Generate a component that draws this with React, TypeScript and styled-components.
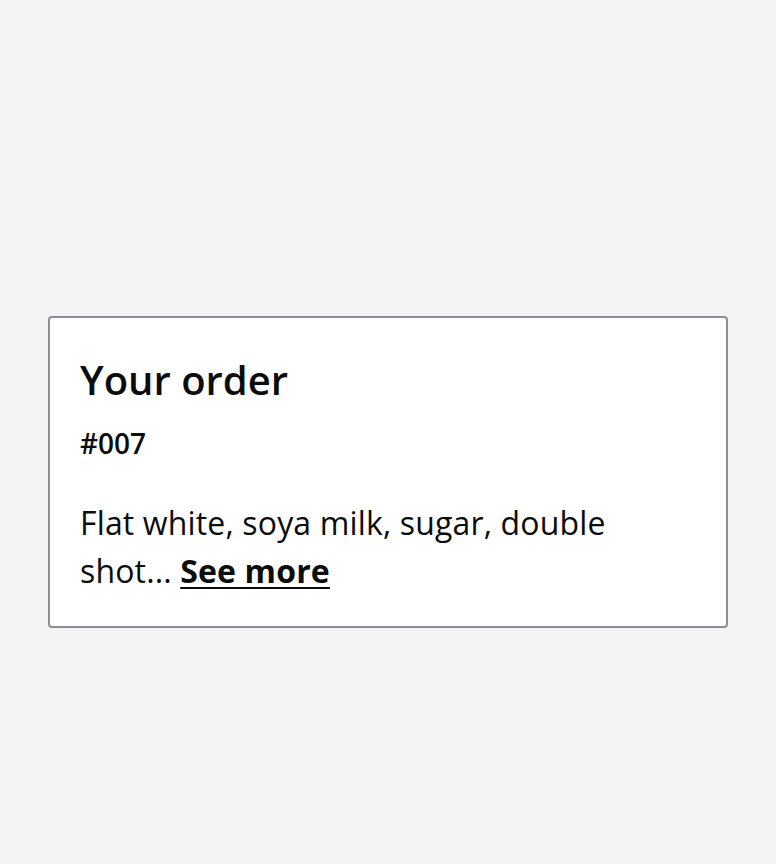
import React from "react";
import styled, { createGlobalStyle } from "styled-components";

const Global = createGlobalStyle`
  html, body { margin: 0; padding: 0; background: #f4f4f4; }
  body { font-family: "Open Sans", "Noto Sans", sans-serif; color: #0b0c0c; }
`;

const Page = styled.div`
  min-height: 864px;
  box-sizing: border-box;
  padding: 316px 48px 0;
`;

const Card = styled.section`
  background: #fff;
  border: 2px solid #8c8d96;
  border-radius: 4px;
  padding: 36px 30px 30px;
  height: 312px;
  box-sizing: border-box;
`;

const Title = styled.h2`
  margin: 0;
  font-size: 40px;
  font-weight: 600;
  line-height: 52px;
`;

const OrderNo = styled.div`
  margin-top: 19px;
  font-size: 28px;
  font-weight: 600;
  line-height: 36px;
`;

const Desc = styled.p`
  margin: 38px 0 0;
  max-width: 600px;
  font-size: 32px;
  letter-spacing: 0.15px;
  line-height: 48px;
`;

const More = styled.a`
  font-weight: 700;
  color: #0b0c0c;
  text-decoration: underline;
  text-underline-offset: 4px;
  text-decoration-thickness: 2px;
`;

export default function App() {
  return (
    <>
      <Global />
      <Page>
        <Card>
          <Title>Your order</Title>
          <OrderNo>#007</OrderNo>
          <Desc>
            Flat white, soya milk, sugar, double shot... <More href="#">See more</More>
          </Desc>
        </Card>
      </Page>
    </>
  );
}
